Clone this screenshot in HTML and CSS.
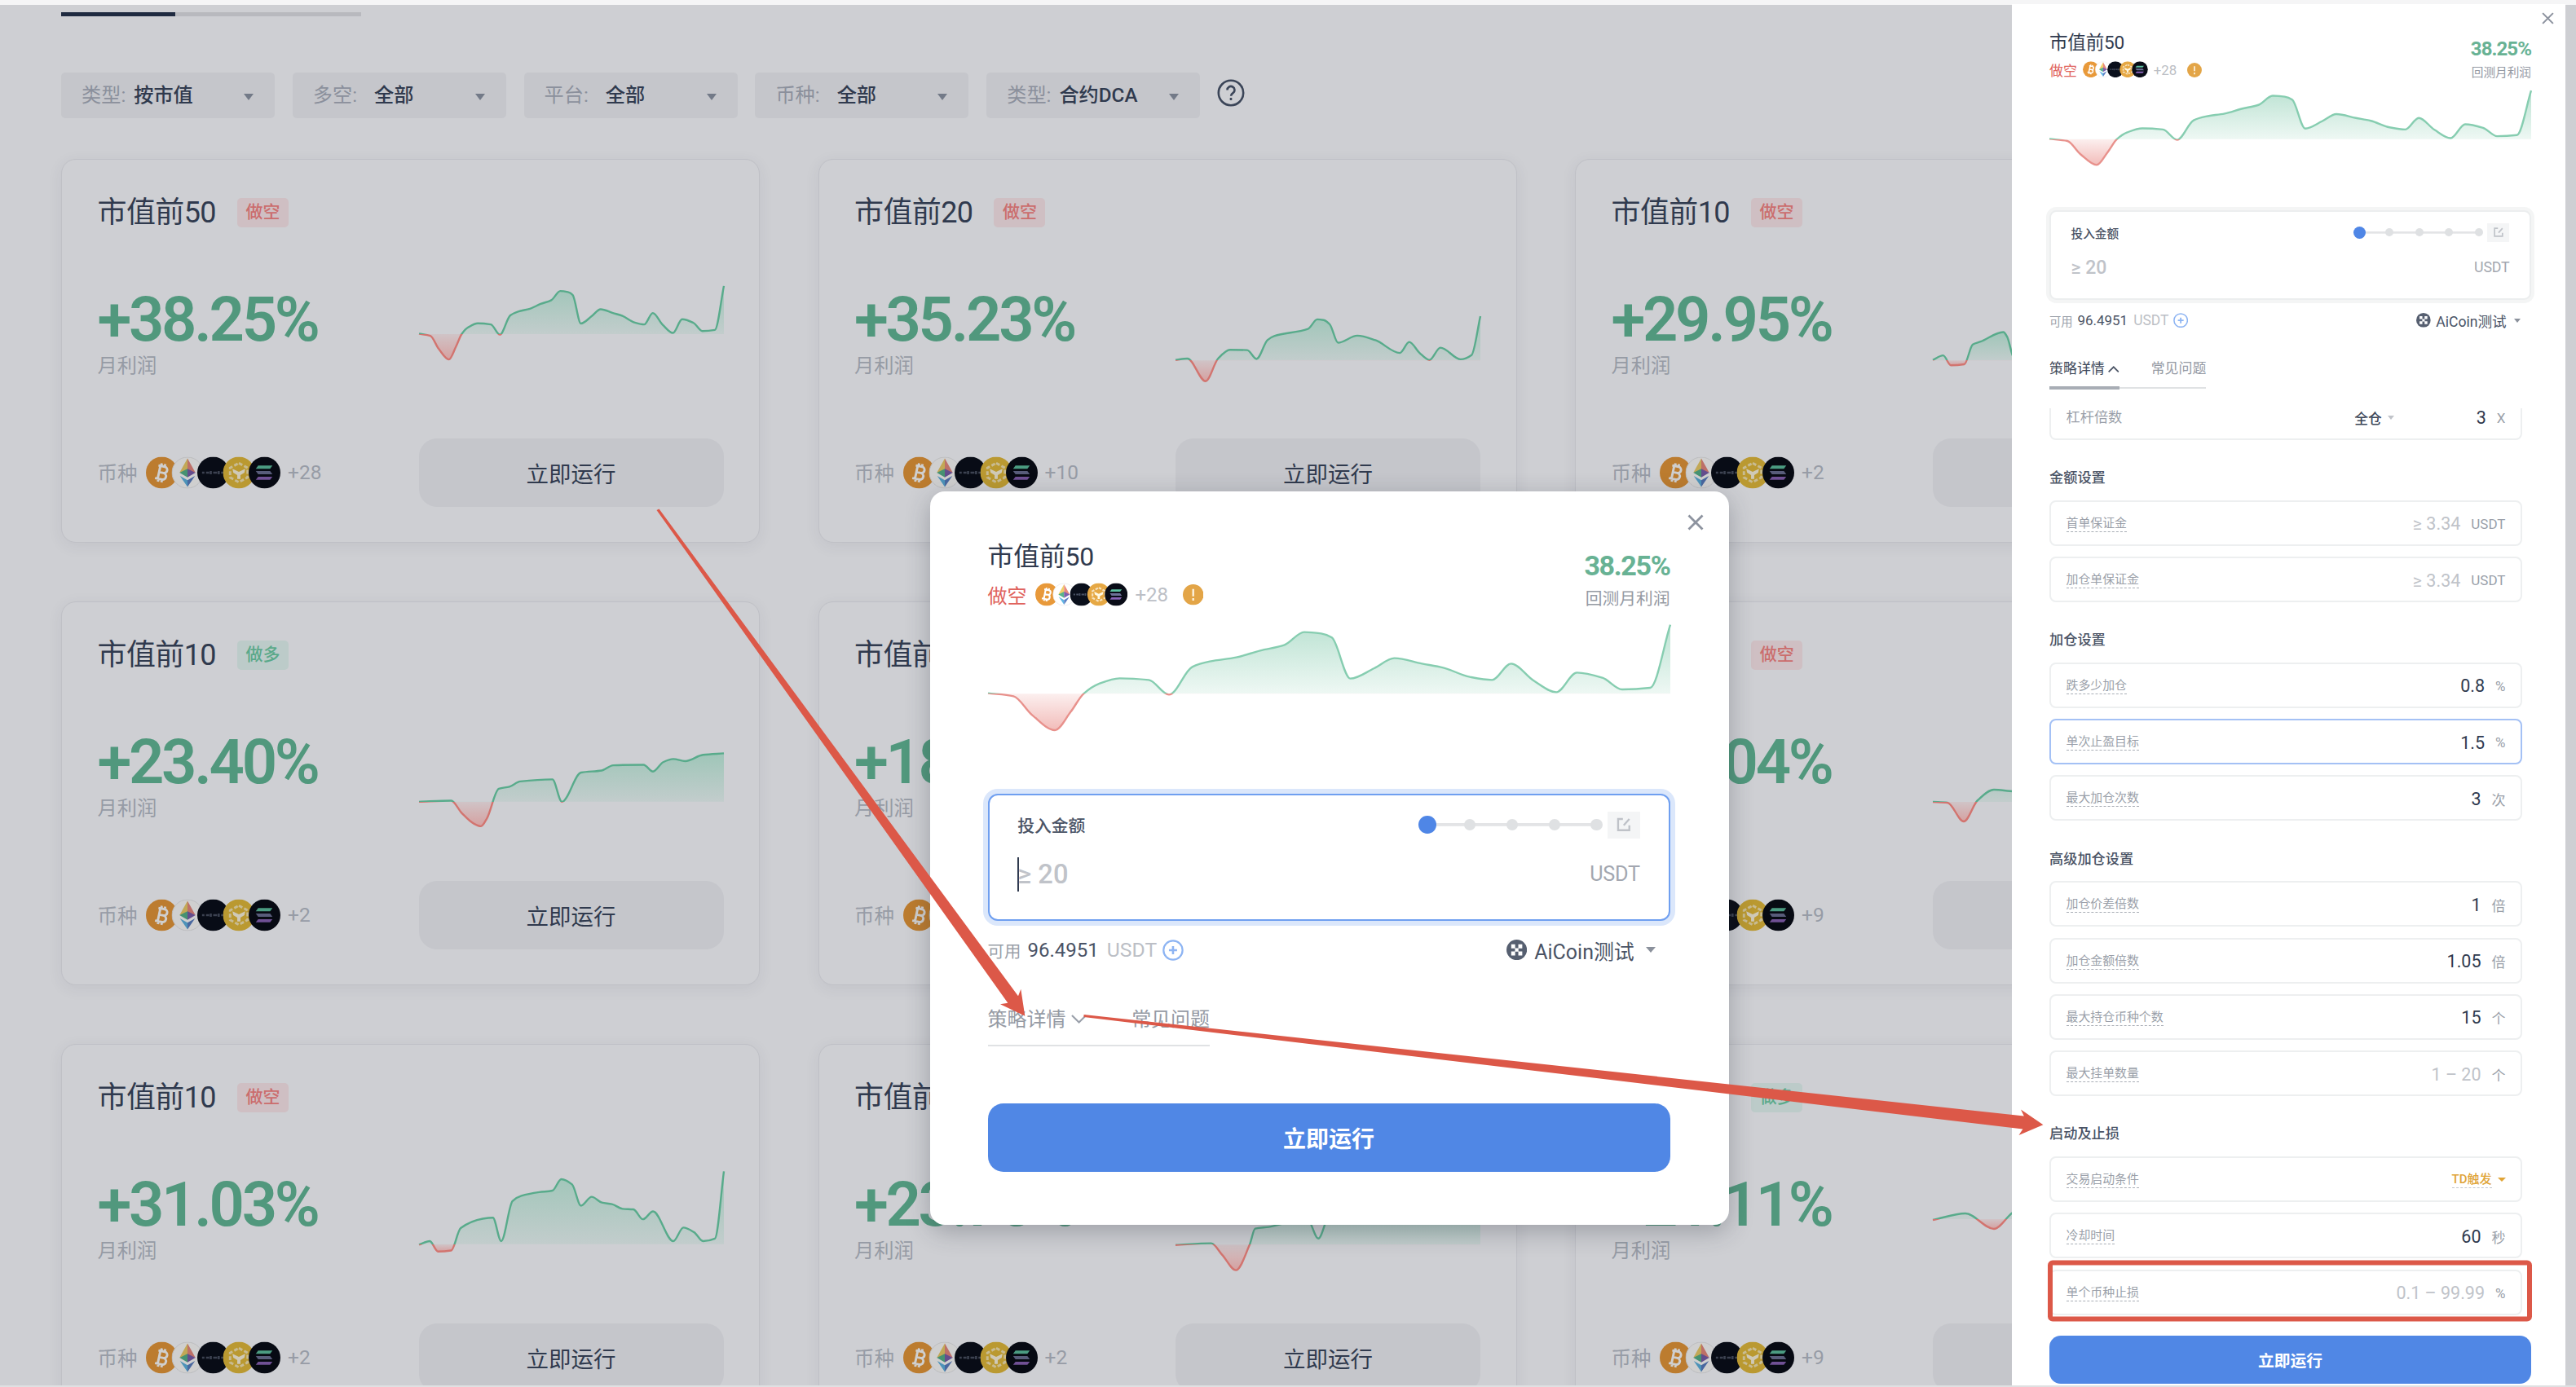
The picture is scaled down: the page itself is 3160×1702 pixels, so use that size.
FILE: index.html
```html
<!DOCTYPE html>
<html lang="zh-CN">
<head>
<meta charset="utf-8">
<title>合约DCA</title>
<link rel="stylesheet" href="styles.css">
</head>
<body>
<svg class="defs" width="0" height="0" aria-hidden="true">
  <defs>
    <symbol id="btc" viewBox="0 0 40 40"><circle cx="20" cy="20" r="20" fill="#e8993a"/><g transform="rotate(12 20 20)" fill="none" stroke="#fff" stroke-width="3"><path d="M14 12h8a4 4 0 0 1 0 8h-6M22 20a4.200 4.200 0 0 1 0 8.400h-9M16.500 12v16M17.500 8.500v4M22 8.500v4M17.500 28v4M22 28v4"/></g></symbol>
    <symbol id="eth" viewBox="0 0 40 40"><circle cx="20" cy="20" r="19.500" fill="#fff" stroke="#e6e7ea"/><path d="M20 2v15l-10 3z" fill="#f0cf6a"/><path d="M20 2v15l10 3z" fill="#e98a80"/><path d="M10 20l10-5v11z" fill="#57b48d"/><path d="M30 20l-10-5v11z" fill="#7c5fae"/><path d="M10.500 24l9.500 5.500V38z" fill="#5fb5e4"/><path d="M29.500 24L20 29.500V38z" fill="#5a7fc4"/></symbol>
    <symbol id="dark" viewBox="0 0 40 40"><circle cx="20" cy="20" r="20" fill="#0a0f1b"/><path d="M6 20h3M11 20h4M17 18v4M20 20h5M27 18v4M30 20h5" stroke="#4a5264" stroke-width="2.600"/></symbol>
    <symbol id="gold" viewBox="0 0 40 40"><circle cx="20" cy="20" r="20" fill="#e6bd3c"/><path d="M20 8l11 6v12l-11 6-11-6V14z" fill="none" stroke="#f7e7b4" stroke-width="3" stroke-dasharray="5 2.500"/><path d="M12 15l8 4 8-4-1 5-5 3v5h-4v-5l-5-3z" fill="#fff8e2"/></symbol>
    <symbol id="amber" viewBox="0 0 40 40"><circle cx="20" cy="20" r="20" fill="#e6a844"/><path d="M20 8l11 6v12l-11 6-11-6V14z" fill="none" stroke="#f7e3c0" stroke-width="3" stroke-dasharray="5 2.500"/><path d="M12 15l8 4 8-4-1 5-5 3v5h-4v-5l-5-3z" fill="#fff8e2"/></symbol>
    <symbol id="sol" viewBox="0 0 40 40"><circle cx="20" cy="20" r="20" fill="#090c17"/><path d="M12 11h18l-3 4H9z" fill="#5cc0a0"/><path d="M9 18h18l3 4H12z" fill="#6d7297"/><path d="M12 25h18l-3 4H9z" fill="#8a63b8"/></symbol>
    <symbol id="coins" viewBox="0 0 166 40"><use href="#btc" width="39" height="39" y=".5"/><use href="#eth" x="31.500" width="39" height="39" y=".5"/><use href="#dark" x="63" width="39" height="39" y=".5"/><use href="#gold" x="94.500" width="39" height="39" y=".5"/><use href="#sol" x="126" width="39" height="39" y=".5"/></symbol>
    <symbol id="coins-tight" viewBox="0 0 114 29"><use href="#btc" width="28" height="28" y=".5"/><use href="#eth" x="21.300" width="28" height="28" y=".5"/><use href="#dark" x="42.600" width="28" height="28" y=".5"/><use href="#amber" x="63.900" width="28" height="28" y=".5"/><use href="#sol" x="85.200" width="28" height="28" y=".5"/></symbol>
    <symbol id="edit" viewBox="0 0 20 20"><path d="M9 3H3v14h14v-6M10 11L17 3" fill="none" stroke="#bfc2c8" stroke-width="2.400"/></symbol>
    <symbol id="close" viewBox="0 0 20 20"><path d="M1.500 1.500l17 17M18.500 1.500l-17 17" fill="none" stroke="#8d939f" stroke-width="2.800"/></symbol>
    <symbol id="plus" viewBox="0 0 26 26"><circle cx="13" cy="13" r="11.700" fill="none" stroke="#8db4f3" stroke-width="2.200"/><path d="M13 8v10M8 13h10" stroke="#8db4f3" stroke-width="2.600"/></symbol>
    <symbol id="warn" viewBox="0 0 26 26"><circle cx="13" cy="13" r="13" fill="#e3a547"/><path d="M13 6v9M13 17.500v3" stroke="#fbeed6" stroke-width="2.600"/></symbol>
    <symbol id="okx" viewBox="0 0 26 26"><circle cx="13" cy="13" r="13" fill="#565f70"/><path d="M6 6h5v5H6zM15 6h5v5h-5zM10.800 10.800h4.400v4.400h-4.400zM6 15h5v5H6zM15 15h5v5h-5z" fill="#fff"/></symbol>
    <symbol id="down" viewBox="0 0 20 12"><path d="M1 1l9 9 9-9" fill="none" stroke="#9aa0aa" stroke-width="2.200"/></symbol>
    <symbol id="up" viewBox="0 0 20 12"><path d="M1 11l9-9 9 9" fill="none" stroke="#4d5667" stroke-width="2.600"/></symbol>
  </defs>
</svg>

<main class="page">
  <div class="tabline"><span class="tabline-on"></span></div>
  <nav class="filters">
    <div class="filter"><span class="filter-name">类型:</span><span class="filter-value">按市值</span><i class="caret"></i></div>
    <div class="filter filter-wide"><span class="filter-name">多空:</span><span class="filter-value">全部</span><i class="caret"></i></div>
    <div class="filter filter-wide"><span class="filter-name">平台:</span><span class="filter-value">全部</span><i class="caret"></i></div>
    <div class="filter filter-wide"><span class="filter-name">币种:</span><span class="filter-value">全部</span><i class="caret"></i></div>
    <div class="filter"><span class="filter-name">类型:</span><span class="filter-value">合约DCA</span><i class="caret"></i></div>
    <svg class="help" viewBox="0 0 34 34"><circle cx="17" cy="17" r="15.200" fill="none" stroke="#3b4558" stroke-width="2.600"/><path d="M12.500 13.500a4.500 4.500 0 1 1 7 3.700c-1.700 1.100-2.400 1.800-2.400 3.600M17 23v3" fill="none" stroke="#3b4558" stroke-width="2.600"/></svg>
  </nav>

  <section class="grid">
    <article class="card">
      <header class="card-head"><h2>市值前50</h2><span class="badge short">做空</span></header>
      <div class="card-body"><div class="stat"><strong>+38.25%</strong><span>月利润</span></div><svg class="chart" data-series="top50" viewBox="142 466 1286 602"></svg></div>
      <footer class="card-foot"><span class="muted">币种</span><svg class="coins"><use href="#coins"/></svg><span class="muted">+28</span><button class="run">立即运行</button></footer>
    </article>
    <article class="card">
      <header class="card-head"><h2>市值前20</h2><span class="badge short">做空</span></header>
      <div class="card-body"><div class="stat"><strong>+35.23%</strong><span>月利润</span></div><svg class="chart" data-series="top20" viewBox="755 772 587 323"></svg></div>
      <footer class="card-foot"><span class="muted">币种</span><svg class="coins"><use href="#coins"/></svg><span class="muted">+10</span><button class="run">立即运行</button></footer>
    </article>
    <article class="card">
      <header class="card-head"><h2>市值前10</h2><span class="badge short">做空</span></header>
      <div class="card-body"><div class="stat"><strong>+29.95%</strong><span>月利润</span></div><svg class="chart" data-series="top10c" viewBox="1277 772 977 323"></svg></div>
      <footer class="card-foot"><span class="muted">币种</span><svg class="coins"><use href="#coins"/></svg><span class="muted">+2</span><button class="run"></button></footer>
    </article>

    <article class="card">
      <header class="card-head"><h2>市值前10</h2><span class="badge long">做多</span></header>
      <div class="card-body"><div class="stat"><strong>+23.40%</strong><span>月利润</span></div><svg class="chart" data-series="long10" viewBox="698 279 512 219"></svg></div>
      <footer class="card-foot"><span class="muted">币种</span><svg class="coins"><use href="#coins"/></svg><span class="muted">+2</span><button class="run">立即运行</button></footer>
    </article>
    <article class="card">
      <header class="card-head"><h2>市值前20</h2><span class="badge long">做多</span></header>
      <div class="card-body"><div class="stat"><strong>+18.62%</strong><span>月利润</span></div><svg class="chart" data-series="long10" viewBox="698 279 512 219"></svg></div>
      <footer class="card-foot"><span class="muted">币种</span><svg class="coins"><use href="#coins"/></svg><button class="run"></button></footer>
    </article>
    <article class="card">
      <header class="card-head"><h2>市值前1</h2><span class="badge short shift">做空</span></header>
      <div class="card-body"><div class="stat"><strong>+17.04%</strong><span>月利润</span></div><svg class="chart" data-series="dip" viewBox="0 0 374 140"></svg></div>
      <footer class="card-foot"><span class="muted">币种</span><svg class="coins"><use href="#coins"/></svg><span class="muted">+9</span><button class="run"></button></footer>
    </article>

    <article class="card">
      <header class="card-head"><h2>市值前10</h2><span class="badge short">做空</span></header>
      <div class="card-body"><div class="stat"><strong>+31.03%</strong><span>月利润</span></div><svg class="chart" data-series="top10" viewBox="698 1129 512 219"></svg></div>
      <footer class="card-foot"><span class="muted">币种</span><svg class="coins"><use href="#coins"/></svg><span class="muted">+2</span><button class="run">立即运行</button></footer>
    </article>
    <article class="card">
      <header class="card-head"><h2>市值前10</h2><span class="badge long">做多</span></header>
      <div class="card-body"><div class="stat"><strong>+23.70%</strong><span>月利润</span></div><svg class="chart" data-series="late" viewBox="475 893 555 335"></svg></div>
      <footer class="card-foot"><span class="muted">币种</span><svg class="coins"><use href="#coins"/></svg><span class="muted">+2</span><button class="run">立即运行</button></footer>
    </article>
    <article class="card">
      <header class="card-head"><h2>市值前1</h2><span class="badge long shift">做多</span></header>
      <div class="card-body"><div class="stat"><strong>+21.11%</strong><span>月利润</span></div><svg class="chart" data-series="soft" viewBox="0 0 374 140"></svg></div>
      <footer class="card-foot"><span class="muted">币种</span><svg class="coins"><use href="#coins"/></svg><span class="muted">+9</span><button class="run"></button></footer>
    </article>
  </section>
</main>

<div class="modal">
  <svg class="close"><use href="#close"/></svg>
  <div class="form">
    <div class="form-head">
      <div><h3>市值前50</h3>
        <div class="sub"><span class="red">做空</span><svg class="tight"><use href="#coins-tight"/></svg><span class="pale">+28</span><svg class="warn"><use href="#warn"/></svg></div></div>
      <div class="gain"><strong>38.25%</strong><span>回测月利润</span></div>
    </div>
    <svg class="wave" data-series="top50" viewBox="142 504 1286 495"></svg>
    <div class="amount focus">
      <div class="amount-top"><span>投入金额</span><div class="steps"><i></i><i></i><i></i><i></i><i></i></div><span class="edit"><svg><use href="#edit"/></svg></span></div>
      <div class="amount-row"><span class="ph"><span class="cursor"></span>≥ 20</span><span class="unit">USDT</span></div>
    </div>
    <div class="avail"><span class="small">可用</span><span class="num">96.4951</span><span class="pale">USDT</span><svg class="plus"><use href="#plus"/></svg><div class="acct"><svg><use href="#okx"/></svg><span>AiCoin测试</span><i class="caret"></i></div></div>
    <div class="tabs"><span class="tab">策略详情<svg><use href="#down"/></svg></span><span class="tab">常见问题</span></div>
    <button class="go">立即运行</button>
  </div>
</div>

<aside class="drawer">
  <svg class="close"><use href="#close"/></svg>
  <div class="form">
    <div class="form-head">
      <div><h3>市值前50</h3>
        <div class="sub"><span class="red">做空</span><svg class="tight"><use href="#coins-tight"/></svg><span class="pale">+28</span><svg class="warn"><use href="#warn"/></svg></div></div>
      <div class="gain"><strong>38.25%</strong><span>回测月利润</span></div>
    </div>
    <svg class="wave" data-series="top50" viewBox="142 504 1286 495"></svg>
    <div class="amount">
      <div class="amount-top"><span>投入金额</span><div class="steps"><i></i><i></i><i></i><i></i><i></i></div><span class="edit"><svg><use href="#edit"/></svg></span></div>
      <div class="amount-row"><span class="ph">≥ 20</span><span class="unit">USDT</span></div>
    </div>
    <div class="avail"><span class="small">可用</span><span class="num">96.4951</span><span class="pale">USDT</span><svg class="plus"><use href="#plus"/></svg><div class="acct"><svg><use href="#okx"/></svg><span>AiCoin测试</span><i class="caret"></i></div></div>
    <div class="tabs"><span class="tab on">策略详情<svg><use href="#up"/></svg></span><span class="tab">常见问题</span></div>
  </div>
  <div class="settings">
    <div class="row cut"><span class="plain">杠杆倍数</span><span class="mode">全仓<i class="caret"></i></span><b>3</b><em>X</em></div>
    <h4>金额设置</h4>
    <div class="row"><span>首单保证金</span><b class="hint">≥ 3.34</b><em>USDT</em></div>
    <div class="row"><span>加仓单保证金</span><b class="hint">≥ 3.34</b><em>USDT</em></div>
    <h4>加仓设置</h4>
    <div class="row"><span>跌多少加仓</span><b>0.8</b><em>%</em></div>
    <div class="row active"><span>单次止盈目标</span><b>1.5</b><em>%</em></div>
    <div class="row"><span>最大加仓次数</span><b>3</b><em>次</em></div>
    <h4>高级加仓设置</h4>
    <div class="row"><span>加仓价差倍数</span><b>1</b><em>倍</em></div>
    <div class="row"><span>加仓金额倍数</span><b>1.05</b><em>倍</em></div>
    <div class="row"><span>最大持仓币种个数</span><b>15</b><em>个</em></div>
    <div class="row"><span>最大挂单数量</span><b class="hint">1 – 20</b><em>个</em></div>
    <h4>启动及止损</h4>
    <div class="row"><span>交易启动条件</span><span class="trigger">TD触发</span><i class="caret gold"></i></div>
    <div class="row"><span>冷却时间</span><b>60</b><em>秒</em></div>
    <div class="row"><span>单个币种止损</span><b class="hint">0.1 – 99.99</b><em>%</em></div>
  </div>
  <button class="go">立即运行</button>
</aside>

<svg class="marks" viewBox="0 0 3160 1702">
  <g fill="#dc5848">
    <path d="M805.500 626L808.500 624.500 1249 1222.300 1252.300 1213.700 1257.300 1246.700 1227 1232.300 1236.300 1230.700z"/>
    <path d="M1329.500 1245L2482.800 1369.600 2479 1361.600 2506.400 1380.300 2476.500 1393 2481.400 1385.500 1329.500 1248z"/>
  </g>
  <rect x="2515" y="1549.500" width="588" height="69" rx="3" fill="none" stroke="#dc5848" stroke-width="6"/>
</svg>
<div class="edge"></div>
<script src="charts.js"></script>
</body>
</html>
```
FILE: charts.js
```js
// Profit curves: baseline value plus [x, y] samples in the units of each chart's viewBox.
const series = {
  top50: { base: 784, points: [[142,782],[190,793],[225,862],[268,918],[298,850],[322,784],[350,748],[390,727],[445,733],[483,787],[527,685],[560,665],[610,650],[655,625],[700,605],[738,557],[770,562],[790,577],[825,728],[870,690],[908,653],[960,673],[1000,688],[1050,722],[1092,733],[1128,673],[1170,735],[1213,778],[1252,706],[1300,725],[1337,768],[1390,762],[1428,530]] },
  top20: { base: 1017, points: [[755,1016],[778,1012],[813,1076],[837,1012],[860,987],[893,988],[911,1013],[932,960],[945,948],[1010,928],[1028,901],[1040,903],[1052,915],[1068,967],[1105,947],[1140,960],[1187,996],[1205,965],[1225,996],[1244,1016],[1265,981],[1304,1014],[1325,1002],[1342,892]] },
  top10c: { base: 1017, points: [[1277,1016],[1310,1003],[1335,1031],[1378,1028],[1405,972],[1430,964],[1503,937],[1515,950],[1538,1010],[1570,960],[2254,950]] },
  long10: { base: 443, points: [[698,443],[752,441],[770,465],[790,485],[802,490],[812,475],[832,418],[850,414],[868,404],[922,400],[938,443],[970,387],[1005,383],[1024,373],[1075,372],[1091,385],[1108,367],[1125,361],[1145,365],[1175,353],[1210,350]] },
  top10: { base: 1293, points: [[698,1294],[716,1287],[730,1307],[752,1305],[768,1262],[805,1244],[822,1242],[836,1287],[855,1210],[870,1200],[900,1193],[922,1190],[937,1168],[955,1178],[970,1219],[988,1202],[1005,1213],[1022,1216],[1040,1225],[1058,1226],[1074,1245],[1091,1230],[1125,1287],[1142,1261],[1160,1270],[1175,1287],[1195,1282],[1210,1153]] },
  late: { base: 1145, points: [[475,1146],[540,1141],[560,1175],[585,1220],[610,1145],[620,1098],[645,1093],[715,1070],[735,1127],[755,1060],[1030,1000]] },
  dip: { base: 105, points: [[0,105],[18,106],[38,129],[55,103],[75,90],[100,92],[374,60]] },
  soft: { base: 74, points: [[0,75],[40,67],[75,86],[98,66],[150,40],[374,20]] }
};

// Monotone cubic path, so a curve never overshoots its samples.
function curve(p) {
  const n = p.length, s = [], m = [];
  for (let i = 0; i < n - 1; i++) s.push((p[i + 1][1] - p[i][1]) / (p[i + 1][0] - p[i][0]));
  for (let i = 0; i < n; i++) {
    if (i === 0) m.push(s[0]);
    else if (i === n - 1) m.push(s[n - 2]);
    else m.push(s[i - 1] * s[i] <= 0 ? 0 : 2 * s[i - 1] * s[i] / (s[i - 1] + s[i]));
  }
  let d = `M${p[0][0]} ${p[0][1]}`;
  for (let i = 0; i < n - 1; i++) {
    const h = (p[i + 1][0] - p[i][0]) / 3;
    d += `C${p[i][0] + h} ${p[i][1] + m[i] * h} ${p[i + 1][0] - h} ${p[i + 1][1] - m[i + 1] * h} ${p[i + 1][0]} ${p[i + 1][1]}`;
  }
  return d;
}

document.querySelectorAll('svg[data-series]').forEach((svg, i) => {
  const { base, points } = series[svg.dataset.series];
  const ys = points.map(p => p[1]);
  const top = Math.min(...ys), bottom = Math.max(...ys, base + 1);
  const cut = (base - top) / (bottom - top);
  const light = svg.classList.contains('wave');
  const green = light ? '#86cdb0' : '#58ab8b', red = light ? '#e8918c' : '#d2746f';
  const line = curve(points);
  const axis = `gradientUnits="userSpaceOnUse" x1="0" x2="0" y1="${top}" y2="${bottom}"`;
  svg.setAttribute('preserveAspectRatio', 'none');
  svg.innerHTML = `<defs>
    <linearGradient id="s${i}" ${axis}><stop offset="${cut}" stop-color="${green}"/><stop offset="${cut}" stop-color="${red}"/></linearGradient>
    <linearGradient id="f${i}" ${axis}><stop offset="0" stop-color="#58b890" stop-opacity=".4"/><stop offset="${cut}" stop-color="#58b890" stop-opacity=".1"/><stop offset="${cut}" stop-color="#e0605a" stop-opacity=".1"/><stop offset="1" stop-color="#e0605a" stop-opacity=".42"/></linearGradient></defs>
    <path d="${line}L${points[points.length - 1][0]} ${base}L${points[0][0]} ${base}Z" fill="url(#f${i})"/>
    <path d="${line}" fill="none" stroke="url(#s${i})" stroke-width="2.400" stroke-linejoin="round" vector-effect="non-scaling-stroke"/>`;
});
```
FILE: styles.css
```css
* { box-sizing: border-box; margin: 0; padding: 0; }
body {
  position: relative; width: 3160px; height: 1702px; overflow: hidden;
  background: #f5f5f6; color: #303a4e;
  font-family: Roboto, "Noto Sans CJK SC", sans-serif;
}
button { border: 0; font-family: inherit; }
i, em { font-style: normal; }
svg { display: block; flex: none; }
.defs { position: absolute; }
.caret { flex: none; width: 0; height: 0; border: 6.500px solid transparent; border-top: 8px solid #737a88; border-bottom: 0; }

/* strategy list */
.page { height: 1702px; padding: 9px 0 0 75px; overflow: hidden; background: #cecfd3; border-top: 6px solid #f5f5f6; }
.tabline { width: 368px; height: 5px; background: #b8b9be; }
.tabline-on { display: block; width: 140px; height: 5px; background: #1f2a40; }
.filters { display: flex; gap: 21.800px; margin-top: 69px; height: 56px; }
.filter { display: flex; align-items: flex-start; width: 262px; padding: 0 26px 0 25px; border-radius: 5px; background: #c5c6cb; font-size: 24.200px; line-height: 56px; }
.filter-name { color: #8b909c; margin-right: 10px; }
.filter-wide .filter-name { margin-right: 21px; }
.filter-value { font-weight: 500; }
.filter .caret { margin-left: auto; margin-top: 26px; }
.help { width: 34px; height: 34px; margin-top: 8px; margin-left: -1px; }
.grid { display: grid; grid-template-columns: repeat(3, 857px); grid-auto-rows: 471px; gap: 72.200px 71.500px; width: 2715px; margin: 50px 0 0 0; }
.card { display: flex; flex-direction: column; padding: 44.500px 43.500px 0; border: 1.500px solid #bfc0c6; border-radius: 18px; box-shadow: 0 4px 18px rgba(60, 66, 85, .08); background: #cecfd3; }
.card-head { display: flex; align-items: center; height: 40px; gap: 26px; }
.card-head h2 { font-size: 36px; font-weight: 400; line-height: 40px; letter-spacing: -.600px; }
.badge { width: 63px; height: 36px; border-radius: 5px; font-size: 21px; line-height: 35px; text-align: center; font-weight: 500; }
.badge.shift { margin-left: 20px; }
.short { background: #cfbfc3; color: #cb6d6d; }
.long { background: #bccbc9; color: #5aa98a; }
.card-body { display: flex; justify-content: space-between; height: 140px; margin-top: 55px; }
.stat { display: flex; flex-direction: column; }
.stat strong { font-size: 76px; line-height: 76px; height: 76px; margin-top: 18px; font-weight: 600; letter-spacing: -3.300px; color: #51987d; }
.stat span { margin-top: 4px; font-size: 24.300px; line-height: 30px; color: #969ba5; }
.chart { width: 374px; height: 140px; overflow: visible; }
.card-foot { display: flex; align-items: center; height: 84px; margin-top: 62px; }
.muted { font-size: 24.500px; color: #979ca6; }
.coins { width: 166px; height: 40px; margin: 0 8px 0 10.500px; filter: brightness(.81); }
.run { margin-left: auto; width: 374px; height: 84px; border-radius: 22px; background: #c5c6cb; color: #303a4e; font-size: 27.500px; }

/* subscribe form, sized in em so the dialog and the drawer share it */
.form { display: flex; flex-direction: column; color: #4a5365; }
.form-head { display: flex; justify-content: space-between; height: 3.583em; }
.form-head h3 { font-size: 1.333em; line-height: 1.250em; font-weight: 400; color: #303a4e; letter-spacing: -.010em; }
.sub { display: flex; align-items: center; height: 1.417em; margin-top: .375em; }
.red { color: #e0635d; }
.pale { color: #bcbfc6; }
.tight { width: 4.750em; height: 1.208em; margin: 0 .360em 0 .430em; }
.warn { width: 1.060em; height: 1.060em; margin-left: .750em; }
.gain { text-align: right; padding-top: .520em; }
.gain strong { display: block; font-size: 1.420em; line-height: 1.056em; font-weight: 700; letter-spacing: -.040em; color: #68b294; }
.gain span { display: block; margin-top: .400em; font-size: .865em; line-height: 1.440em; color: #959aa4; }
.wave { width: 100%; height: 6.875em; margin-top: .333em; overflow: visible; }
.amount { height: 6.500em; margin-top: 2.130em; padding: .820em 1.450em 0; border: 2px solid #eceeef; border-radius: .500em; box-shadow: 0 0 0 4px #f4f5f5; background: #fff; }
.amount.focus { border-color: #6f9ff0; box-shadow: 0 0 0 6px #dbe7fb; }
.amount-top { display: flex; align-items: center; height: 1.375em; }
.amount-top > span:first-child { font-size: .865em; font-weight: 500; margin-right: auto; }
.steps { display: flex; align-items: center; justify-content: space-between; width: 9.400em; background: linear-gradient(#e3e4e6, #e3e4e6) center / 96% .160em no-repeat; }
.steps i { width: .600em; height: .600em; border-radius: 50%; background: #dfe1e3; }
.steps i:first-child { width: .900em; height: .900em; margin-right: -.150em; background: #4f86e6; }
.edit { display: flex; align-items: center; justify-content: center; width: 1.640em; height: 1.375em; margin-left: .270em; background: #f4f5f6; }
.edit svg { width: .820em; height: .820em; }
.amount-row { display: flex; align-items: center; justify-content: space-between; height: 1.800em; margin-top: .940em; }
.ph { display: flex; align-items: center; font-size: 1.360em; font-weight: 500; color: #c0c3c9; }
.cursor { width: 2px; height: 1.280em; margin-right: -2px; background: #303a4e; }
.unit { font-size: 1.050em; color: #a3a7b0; letter-spacing: -.010em; }
.avail { display: flex; align-items: center; height: 1.500em; margin-top: .740em; }
.small { font-size: .850em; color: #9a9fa9; margin-right: .400em; }
.num { margin-right: .420em; }
.avail .pale { font-size: 1.030em; }
.plus { width: 1.080em; height: 1.080em; margin-left: .300em; }
.acct { display: flex; align-items: center; margin-left: auto; padding-right: .750em; }
.acct span { font-size: 1.040em; }
.acct svg { width: 1.050em; height: 1.050em; margin-right: .370em; }
.acct .caret { margin-left: .570em; border-width: .270em; border-top-width: .330em; border-bottom: 0; border-top-color: #8b919c; }
.tabs { display: flex; align-self: flex-start; margin-top: 2.020em; border-bottom: 2px solid #e0e2e4; color: #959aa4; }
.tab { display: flex; align-items: center; height: 2.080em; padding-bottom: .540em; line-height: 1.500em; }
.tab svg { width: .800em; height: .480em; margin-left: .280em; }
.tab + .tab { margin-left: 2.280em; }
.go { background: #5087e5; color: #fff; font-weight: 700; }

/* dialog */
.modal { position: absolute; left: 1140.500px; top: 603px; width: 980px; height: 900px; padding: 61px 72px 0 71px; border-radius: 18px; background: #fff; box-shadow: 0 8px 30px rgba(40, 45, 60, .3); font-size: 24px; }
.modal .close { position: absolute; right: 31px; top: 28px; width: 20px; height: 20px; }
.modal .go { height: 84px; margin-top: 70px; border-radius: 19px; font-size: 28px; }

/* settings drawer */
.drawer { position: absolute; left: 2468px; top: 5px; width: 679px; height: 1697px; padding: 34px 42px 0 46px; background: #fff; font-size: 16.940px; }
.drawer .close { position: absolute; right: 14px; top: 10px; width: 15px; height: 15px; }
.drawer .form { height: 462px; }
.drawer .tab.on { color: #3d4759; margin-bottom: -3px; border-bottom: 4px solid #a8adb5; height: calc(2.080em + 3px); }
.settings { height: 1138px; padding-right: 11px; color: #9a9fa9; }
.settings h4 { height: 60.500px; padding-top: 21px; font-size: 17.200px; line-height: 24px; font-weight: 500; color: #4a5365; }
.row { display: flex; align-items: center; height: 56px; margin-bottom: 13.300px; padding: 2px 18.500px 0; border: 2px solid #edeff0; border-radius: 8px; }
.row > span:first-child { margin-right: auto; border-bottom: 1.500px dashed #a9aeb6; font-size: 14.900px; line-height: 19px; }
.row > span.plain { border: 0; font-size: 17.200px; }
.row b { font-size: 21.500px; font-weight: 400; color: #303a4e; }
.row b.hint { color: #c0c3c9; }
.row em { margin-left: 13px; font-size: 17px; }
.row.active { border-color: #a4c1f5; }
.row.cut { height: 39px; border-top: 0; border-radius: 0 0 8px 8px; padding: 0 18.500px 14px; }
.mode { display: flex; align-items: center; gap: 7px; margin-right: 101px; font-size: 16.800px; font-weight: 500; color: #3d4759; }
.mode .caret { border-width: 4.500px; border-top: 5px solid #c0c3c9; border-bottom: 0; }
.trigger { border-bottom: 1.500px dashed #c3c6cc; font-size: 15px; line-height: 19px; font-weight: 500; color: #e0a437; }
.caret.gold { margin-left: 7px; border-width: 5px; border-top: 5px solid #e0a437; border-bottom: 0; }
.drawer .go { display: block; width: 591px; height: 59px; border-radius: 14px; font-size: 19.800px; }

/* annotations */
.marks { position: absolute; left: 0; top: 0; width: 3160px; height: 1702px; }
.edge { position: absolute; left: 0; bottom: 0; width: 100%; height: 2px; background: #dfe0e2; }
```
